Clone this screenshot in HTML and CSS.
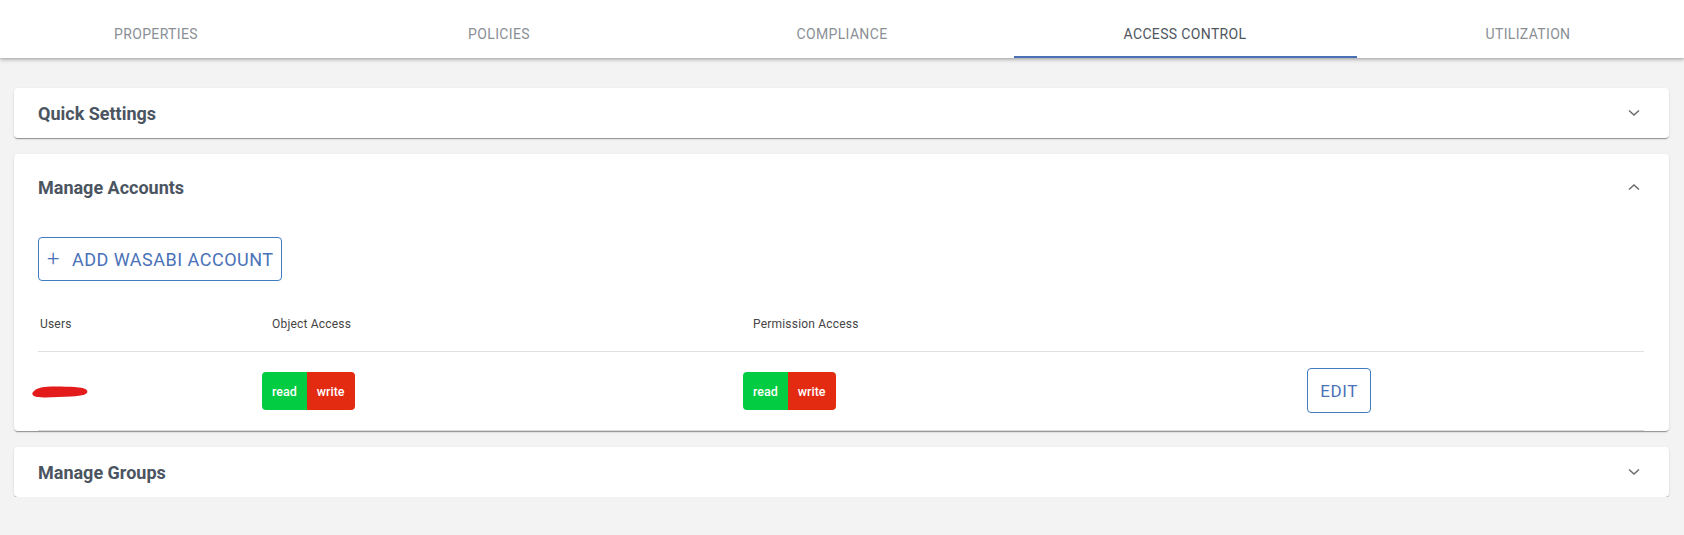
FILE: index.html
```html
<!DOCTYPE html>
<html lang="en">
<head>
<meta charset="utf-8">
<title>Access Control</title>
<link rel="stylesheet" href="styles.css">
</head>
<body>
<nav class="tabs">
  <div class="tab">Properties</div>
  <div class="tab">Policies</div>
  <div class="tab">Compliance</div>
  <div class="tab active">Access Control</div>
  <div class="tab">Utilization</div>
</nav>
<main class="content">
  <section class="card">
    <div class="card-head">
      <h2 class="card-title">Quick Settings</h2>
      <svg class="chev" width="12" height="8" viewBox="0 0 12 8"><polyline points="1,1.5 6,6 11,1.5" fill="none" stroke="#6b6b6b" stroke-width="1.5"/></svg>
    </div>
  </section>
  <section class="card">
    <div class="card-head expanded">
      <h2 class="card-title">Manage Accounts</h2>
      <svg class="chev" width="12" height="8" viewBox="0 0 12 8"><polyline points="1,6.5 6,2 11,6.5" fill="none" stroke="#6b6b6b" stroke-width="1.5"/></svg>
    </div>
    <div class="card-body">
      <button class="btn-add"><span class="plus">+</span>Add Wasabi Account</button>
      <div class="table">
        <div class="row head">
          <div class="cell c-user">Users</div>
          <div class="cell c-pad">Object Access</div>
          <div class="cell c-pad">Permission Access</div>
          <div class="cell"></div>
        </div>
        <div class="row body">
          <div class="cell c-user">
            <svg class="scribble" width="60" height="20" viewBox="0 0 60 20"><path d="M3 9 C6 5 16 4 30 4.5 C44 5 54 5 56 8.5 C58 12 52 14 40 14.5 C28 15 14 16 6 15 C1 14 0 11.5 3 9 Z" fill="#e31b1b"/></svg>
          </div>
          <div class="cell">
            <div class="perm"><span class="p-read">read</span><span class="p-write">write</span></div>
          </div>
          <div class="cell">
            <div class="perm"><span class="p-read">read</span><span class="p-write">write</span></div>
          </div>
          <div class="cell">
            <button class="btn-edit">Edit</button>
          </div>
        </div>
      </div>
    </div>
  </section>
  <section class="card">
    <div class="card-head">
      <h2 class="card-title">Manage Groups</h2>
      <svg class="chev" width="12" height="8" viewBox="0 0 12 8"><polyline points="1,1.5 6,6 11,1.5" fill="none" stroke="#6b6b6b" stroke-width="1.5"/></svg>
    </div>
  </section>
</main>
</body>
</html>
```
FILE: styles.css
```css
* { box-sizing: border-box; }
html, body { margin: 0; padding: 0; }
body {
  background: #f3f3f3;
  font-family: Roboto, "Liberation Sans", Arial, sans-serif;
  color: #333;
  overflow: hidden;
}

.tabs {
  height: 58px;
  background: #fff;
  display: flex;
  justify-content: center;
  overflow: hidden;
  box-shadow: 0 2px 4px rgba(0,0,0,0.22), 0 1px 2px rgba(0,0,0,0.12);
  position: relative;
  z-index: 1;
}
.tab {
  flex: 0 0 343px;
  display: flex;
  align-items: center;
  justify-content: center;
  padding-top: 11px;
  border-bottom: 2px solid transparent;
  text-transform: uppercase;
  font-size: 14px;
  letter-spacing: 0.35px;
  color: #8a8f96;
}
.tab.active {
  color: #4f565e;
  border-bottom-color: #4a6fb5;
}

.content {
  padding: 30px 15px 0 14px;
  display: flex;
  flex-direction: column;
  gap: 16px;
}

.card {
  background: #fff;
  border-radius: 4px;
  box-shadow: 0 2px 1px -1px rgba(0,0,0,0.25), 0 1px 1px 0 rgba(0,0,0,0.14), 0 1px 3px 0 rgba(0,0,0,0.1);
}
.card-head {
  height: 50px;
  display: flex;
  align-items: center;
  justify-content: space-between;
  padding: 0 29px 0 24px;
}
.card-head.expanded { height: 66px; }
.card-title {
  margin: 0;
  font-size: 18px;
  font-weight: 700;
  color: #4b5461;
}
.chev { display: block; }

.card-body {
  padding: 17px 25px 0 24px;
}

.btn-add {
  display: flex;
  align-items: center;
  height: 44px;
  width: 244px;
  padding: 0 0 0 8px;
  background: #fff;
  border: 1px solid #3f7bbf;
  border-radius: 4px;
  font-family: Roboto, "Liberation Sans", Arial, sans-serif;
  font-size: 18px;
  letter-spacing: 0.5px;
  text-transform: uppercase;
  color: #4a72b8;
  cursor: pointer;
}
.plus {
  font-size: 22px;
  font-weight: 300;
  margin-right: 12px;
  line-height: 1;
}

.table { display: flex; flex-direction: column; }
.row {
  display: grid;
  grid-template-columns: 224px 481px 564px 1fr;
}
.row.head {
  height: 71px;
  border-bottom: 1px solid #e0e0e0;
  align-items: end;
  padding-bottom: 20px;
}
.row.head .cell {
  font-size: 12px;
  color: #444;
  letter-spacing: 0.2px;
}
.c-user { padding-left: 2px; }
.row.head .c-pad { padding-left: 10px; }
.row.body {
  height: 79px;
  align-items: center;
  border-bottom: 1px solid #d9d9d9;
}
.row.body .c-user { padding-left: 0; }
.scribble { display: block; margin-left: -7px; margin-top: 2px; }

.perm {
  display: inline-flex;
  height: 38px;
  border-radius: 4px;
  overflow: hidden;
  font-size: 12.5px;
  font-weight: 500;
  color: #fff;
}
.perm span {
  display: flex;
  align-items: center;
  padding: 0 10px;
}
.p-read { background: #02cc41; }
.p-write { background: #e32b12; }

.btn-edit {
  width: 64px;
  height: 45px;
  background: #fff;
  border: 1px solid #3f7bbf;
  border-radius: 4px;
  font-family: Roboto, "Liberation Sans", Arial, sans-serif;
  font-size: 17px;
  letter-spacing: 0.6px;
  text-transform: uppercase;
  color: #4a72b8;
  cursor: pointer;
  margin-top: -1px;
}
```
